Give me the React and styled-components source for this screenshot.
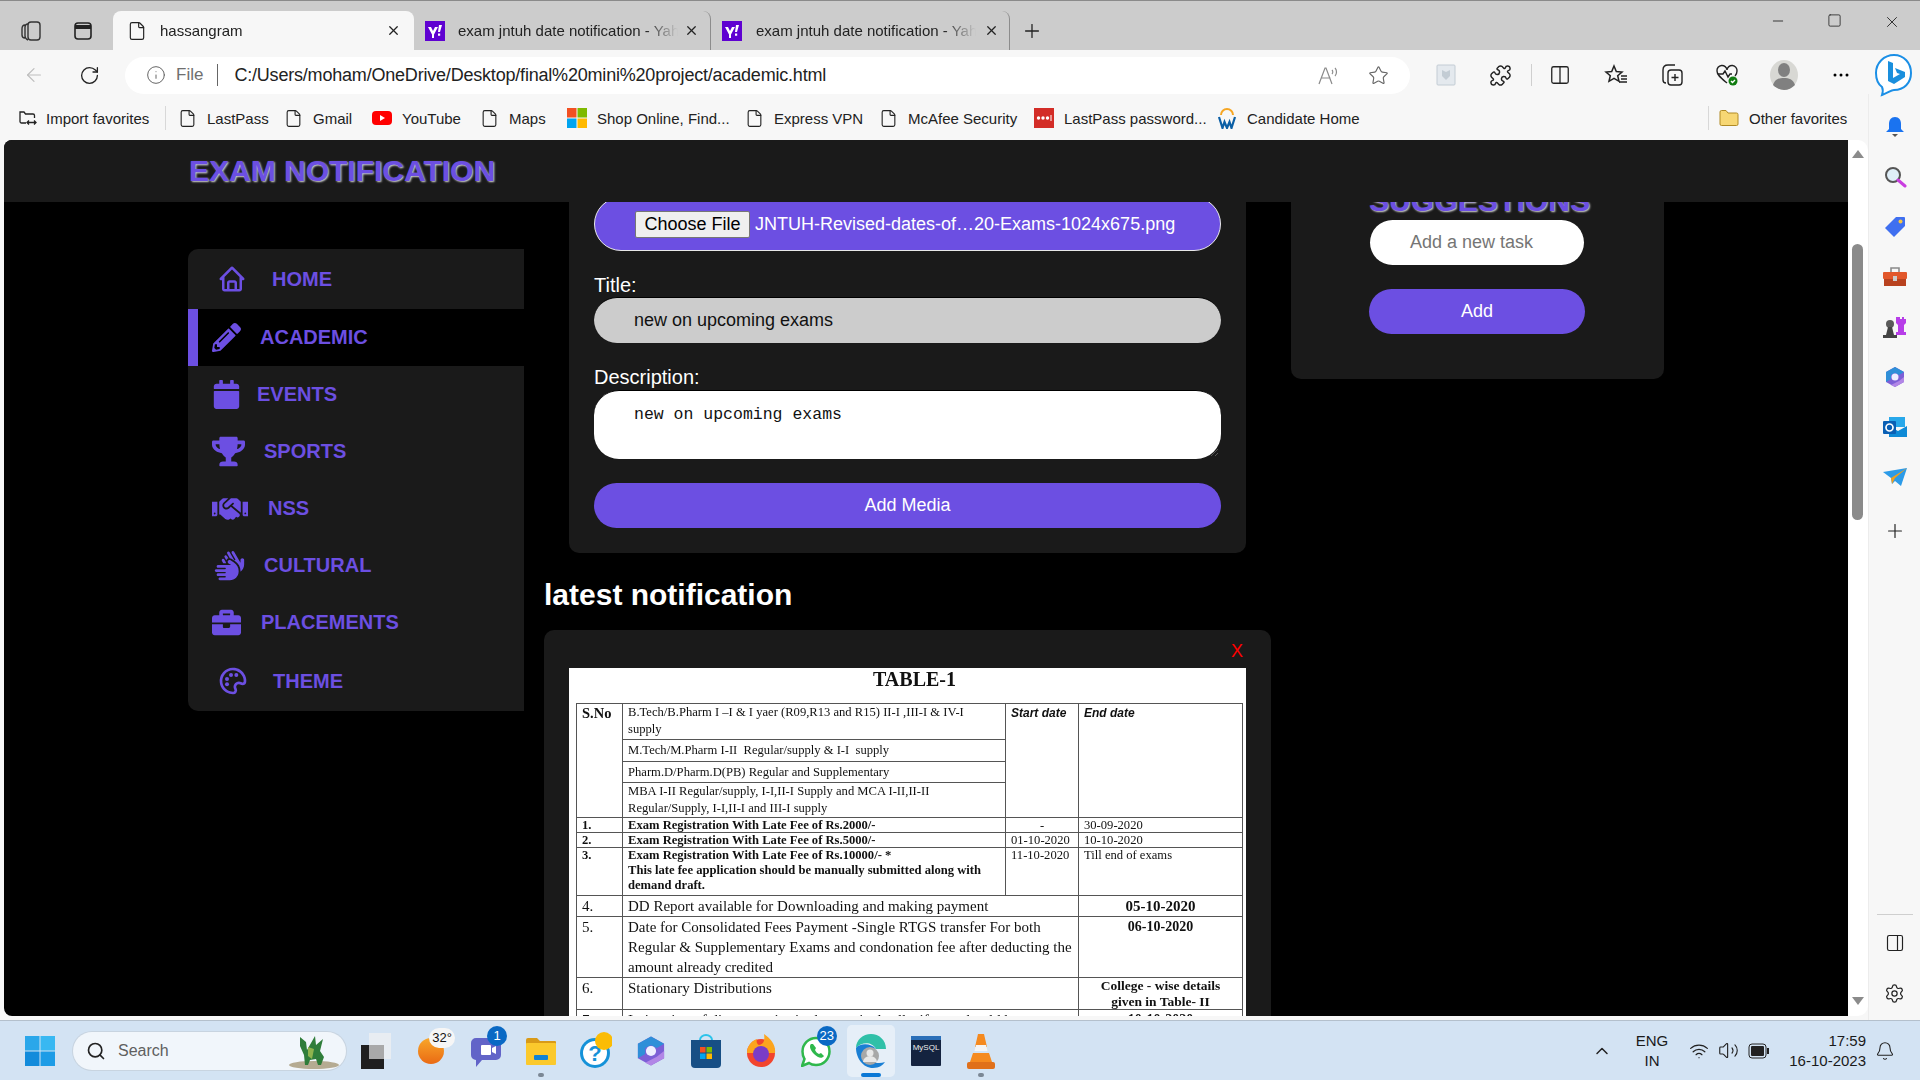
import React from 'react'
import styled, { createGlobalStyle } from 'styled-components'
import { FaPencilAlt, FaCalendar, FaTrophy, FaHandshake, FaBriefcase } from 'react-icons/fa'
import { FaHands } from 'react-icons/fa6'
import { BiHome, BiPalette } from 'react-icons/bi'
import {
  ArrowLeft, RotateCw, Info, Star, Puzzle, Columns2, X, Plus, Minus, Square, File, ChevronUp, Bell,
  Wifi, Volume2, Settings, PanelRight, Search,
} from 'lucide-react'

const violet = '#6c4fe2'
const sans = '"Liberation Sans", Arial, sans-serif'

const Global = createGlobalStyle`
  html, body { margin: 0; padding: 0; width: 1920px; height: 1080px; overflow: hidden; }
  body { font-family: ${sans}; background: #f7f7f7; }
  * { box-sizing: border-box; }
`

const Screen = styled.div`
  width: 1920px;
  height: 1080px;
  display: flex;
  flex-direction: column;
  overflow: hidden;
`

/* ---- browser chrome ---- */
const TitleBar = styled.div`
  height: 50px;
  background: #cccccc;
  border-top: 1px solid #8a8a8a;
  display: flex;
  align-items: flex-end;
  position: relative;
  flex: none;
`
const TabTools = styled.div`
  width: 113px;
  height: 39px;
  display: flex;
  align-items: center;
  gap: 31px;
  padding-left: 20px;
`
const Tab = styled.div`
  width: ${({ $w }) => $w}px;
  height: 39px;
  display: flex;
  align-items: center;
  padding-left: ${({ $active }) => ($active ? 14 : 11)}px;
  background: ${({ $active }) => ($active ? '#f7f7f7' : 'transparent')};
  border-radius: 8px 8px 0 0;
  border-right: ${({ $sep }) => ($sep ? '1px solid #8c8c8c' : 'none')};
  background-clip: padding-box;
  font-size: 15px;
  color: #222;
  position: relative;
`
const TabText = styled.span`
  width: ${({ $w }) => $w}px;
  margin-left: ${({ $ml }) => $ml}px;
  white-space: nowrap;
  overflow: hidden;
  -webkit-mask-image: linear-gradient(90deg, #000 85%, transparent);
  mask-image: linear-gradient(90deg, #000 85%, transparent);
`
const TabClose = styled.span`
  position: absolute;
  right: ${({ $r }) => $r}px;
  top: 12px;
  display: flex;
`
const NewTab = styled.div`
  width: 44px;
  height: 39px;
  display: flex;
  align-items: center;
  justify-content: center;
`
const WindowButtons = styled.div`
  margin-left: auto;
  height: 49px;
  display: flex;
  align-items: flex-start;
  padding-top: 12px;
  padding-right: 19px;
  gap: 41px;
`
const Toolbar = styled.div`
  height: 44px;
  flex: none;
  background: #f7f7f7;
  display: flex;
  align-items: center;
  padding-top: 6px;
  position: relative;
`
const NavBtn = styled.div`
  width: ${({ $w }) => $w}px;
  display: flex;
  justify-content: center;
  margin-left: ${({ $ml }) => $ml || 0}px;
`
const Address = styled.div`
  width: 1285px;
  height: 37px;
  margin-left: 24px;
  background: #fff;
  border-radius: 19px;
  display: flex;
  align-items: center;
  padding-left: 21px;
  font-size: 18px;
  color: #222;
  position: relative;
`
const FileWord = styled.span`
  color: #6f6f6f;
  margin-left: 10px;
  padding-right: 14px;
  border-right: 1px solid #666;
  line-height: 22px;
  font-size: 17px;
`
const Url = styled.span`
  margin-left: 16px;
  letter-spacing: -0.2px;
`
const AddressEnd = styled.div`
  position: absolute;
  right: 21px;
  top: 8px;
  display: flex;
  gap: 28px;
  align-items: center;
`
const ToolIcons = styled.div`
  display: flex;
  align-items: center;
  margin-left: 8px;
`
const ToolSlot = styled.div`
  width: ${({ $w }) => $w || 55}px;
  display: flex;
  justify-content: center;
  align-items: center;
`
const ToolSep = styled.div`
  width: 1px;
  height: 22px;
  margin-left: 4px;
  background: #cfcfcf;
`
const Body = styled.div`
  flex: 1;
  min-height: 0;
  display: flex;
`
const LeftCol = styled.div`
  width: 1868px;
  display: flex;
  flex-direction: column;
`
const FavBar = styled.div`
  height: 46px;
  flex: none;
  display: flex;
  align-items: center;
  padding-left: 18px;
  padding-top: 2px;
  font-size: 15px;
  color: #222;
`
const FavItem = styled.div`
  width: ${({ $w }) => $w}px;
  margin-left: ${({ $ml }) => $ml || 0}px;
  display: flex;
  align-items: center;
  gap: ${({ $gap }) => $gap || 10}px;
  white-space: nowrap;
  flex: none;
`
const FavIcon = styled.span`
  width: 20px;
  height: 20px;
  display: flex;
  align-items: center;
  justify-content: center;
  flex: none;
`
const FavSep = styled.div`
  width: 1px;
  height: 24px;
  background: #d8d8d8;
  flex: none;
`
const Viewport = styled.div`
  height: 876px;
  display: flex;
  padding-left: 4px;
`
const Rail = styled.div`
  width: 52px;
  display: flex;
  flex-direction: column;
  align-items: center;
  padding-top: 8px;
  height: 926px;
  border-left: 1px solid #ececec;
`
const RailSlot = styled.div`
  height: 50px;
  margin-top: ${({ $mt }) => $mt || 0}px;
  display: flex;
  align-items: center;
  justify-content: center;
  flex: none;
`
const RailBottom = styled.div`
  margin-top: auto;
  display: flex;
  flex-direction: column;
  align-items: center;
  margin-bottom: 2px;
`
const RailRule = styled.div`
  width: 36px;
  height: 1px;
  background: #cfcfcf;
  margin-bottom: 3px;
`

/* ---- scrollbar ---- */
const ScrollTrack = styled.div`
  width: 20px;
  background: #fff;
  border-radius: 0 10px 10px 0;
  position: relative;
  flex: none;
`
const ScrollThumb = styled.div`
  position: absolute;
  left: 4px;
  top: 104px;
  width: 11px;
  height: 276px;
  border-radius: 6px;
  background: #8b8b8b;
`
const ScrollArrow = styled.div`
  position: absolute;
  left: 4px;
  ${({ $down }) => ($down ? 'bottom: 11px;' : 'top: 10px;')}
  border-left: 6px solid transparent;
  border-right: 6px solid transparent;
  ${({ $down }) => ($down ? 'border-top: 8px solid #8b8b8b;' : 'border-bottom: 8px solid #8b8b8b;')}
`

/* ---- the page ---- */
const Page = styled.div`
  width: 1844px;
  background: #000;
  border-radius: 8px 0 0 8px;
  overflow: hidden;
  display: flex;
  flex-direction: column;
`
const PageHeader = styled.header`
  height: 62px;
  flex: none;
  background: #1a1a1a;
  display: flex;
  align-items: center;
  padding-left: 185px;
`
const Logo = styled.h1`
  margin: 0;
  font-size: 30px;
  font-weight: 700;
  color: ${violet};
  text-shadow: 1px 1px 2px #d8d8d8;
`
const Content = styled.main`
  flex: 1;
  min-height: 0;
  overflow: hidden;
  display: flex;
  align-items: flex-start;
  padding-left: 184px;
  gap: 20px;
`
const SideNav = styled.nav`
  width: 336px;
  flex: none;
  margin-top: 47px;
  background: #1a1a1a;
  border-radius: 10px 0 0 10px;
  overflow: hidden;
`
const NavItem = styled.a`
  height: ${({ $h }) => $h || 57}px;
  display: flex;
  align-items: center;
  padding-left: ${({ $indent }) => $indent}px;
  gap: ${({ $gap }) => $gap}px;
  color: ${violet};
  font-size: 20px;
  font-weight: 700;
  background: ${({ $active }) => ($active ? '#000' : 'transparent')};
  border-left: ${({ $active }) => ($active ? `10px solid ${violet}` : 'none')};
  svg { flex: none; }
`
const Middle = styled.section`
  width: 727px;
  flex: none;
`
const FormCard = styled.form`
  width: 677px;
  margin-left: 25px;
  margin-top: -5px;
  background: #1a1a1a;
  border-radius: 0 0 10px 10px;
  padding: 0 25px 25px 25px;
  display: flex;
  flex-direction: column;
  color: #fff;
`
const FilePill = styled.div`
  height: 54px;
  background: ${violet};
  border: 1px solid #e8e8e8;
  border-radius: 27px;
  display: flex;
  align-items: center;
  padding-left: 40px;
  font-size: 18px;
  gap: 5px;
  white-space: nowrap;
`
const ChooseFile = styled.button`
  width: 115px;
  height: 27px;
  padding: 0;
  font: 18px ${sans};
  color: #000;
  background: #efefef;
  border: 1px solid #767676;
  border-radius: 2px;
`
const FieldLabel = styled.label`
  font-size: 20px;
  line-height: 23px;
  margin-top: ${({ $mt }) => $mt}px;
  margin-bottom: ${({ $mb }) => $mb ?? 1}px;
`
const TextField = styled.div`
  height: 46px;
  border-radius: 25px;
  background: #cccccc;
  color: #111;
  font-size: 18px;
  padding-left: 40px;
  display: flex;
  align-items: center;
  border-top: 1px solid #000;
`
const TextArea = styled.div`
  height: 69px;
  border-radius: 25px;
  background: #fff;
  color: #111;
  font: 16.5px "Liberation Mono", monospace;
  padding: 14px 0 0 40px;
  position: relative;
  border-top: 1px solid #000;
`
const ResizeGrip = styled.svg`
  position: absolute;
  right: 2px;
  bottom: 2px;
`
const PrimaryButton = styled.button`
  height: 45px;
  margin-top: ${({ $mt }) => $mt}px;
  margin-left: ${({ $ml }) => $ml || 0}px;
  width: ${({ $w }) => ($w ? `${$w}px` : 'auto')};
  border: none;
  border-radius: 25px;
  background: ${violet};
  color: #fff;
  font: 18px ${sans};
`
const SectionTitle = styled.h2`
  margin: 25px 0 18px;
  color: #fff;
  font-size: 30px;
  line-height: 34px;
  font-weight: 700;
`
const PostCard = styled.article`
  background: #1a1a1a;
  border-radius: 10px;
  padding: 38px 25px 0;
  position: relative;
`
const RemoveX = styled.span`
  position: absolute;
  top: 11px;
  right: 28px;
  color: #ff0000;
  font-size: 18px;
`

/* the notice photo in the post */
const Notice = styled.div`
  width: 677px;
  height: 420px;
  background: #fff;
  color: #111;
  font-family: "Liberation Serif", "Times New Roman", serif;
  padding: 0 3px 0 7px;
  filter: blur(0.35px);
`
const NoticeTitle = styled.div`
  height: 35px;
  padding-left: 10px;
  text-align: center;
  font-size: 20px;
  line-height: 23px;
  font-weight: 700;
`
const Sheet = styled.table`
  width: 666px;
  table-layout: fixed;
  border-collapse: collapse;
  font-size: 12.6px;
  line-height: 14px;
  td {
    border: 1px solid #555;
    padding: 0 5px;
    vertical-align: top;
    overflow: hidden;
  }
`
const SheetRow = styled.tr`
  height: ${({ $h }) => $h}px;
`
const Big = styled.td`
  font-size: ${({ $size }) => $size || 15}px;
  line-height: 20px;
  font-weight: ${({ $bold }) => ($bold ? 700 : 400)};
  text-align: ${({ $center }) => ($center ? 'center' : 'left')};
`
const SubCell = styled.td`
  font-weight: ${({ $bold }) => ($bold ? 700 : 400)};
  font-style: ${({ $italic }) => ($italic ? 'italic' : 'normal')};
  font-family: ${({ $italic }) => ($italic ? sans : 'inherit')};
  font-size: ${({ $size }) => $size || 12.6}px;
  line-height: ${({ $lh }) => $lh || 14}px;
  text-align: ${({ $center }) => ($center ? 'center' : 'left')};
`

const SidePanel = styled.aside`
  width: 373px;
  height: 195px;
  flex: none;
  margin-top: -18px;
  background: #1a1a1a;
  border-radius: 0 0 10px 10px;
  padding-left: 79px;
`
const PanelTitle = styled.h2`
  margin: 0 0 2px -1px;
  width: 218px;
  text-align: center;
  font-size: 30px;
  line-height: 34px;
  font-weight: 700;
  letter-spacing: 0.1px;
  color: ${violet};
  text-shadow: 1px 1px 2px #d8d8d8;
`
const TaskInput = styled.div`
  width: 214px;
  height: 45px;
  background: #fff;
  border-radius: 23px;
  color: #757575;
  font-size: 18px;
  display: flex;
  align-items: center;
  padding-left: 40px;
`

/* ---- taskbar ---- */
const TaskBar = styled.footer`
  height: 60px;
  flex: none;
  background: #d3e3f3;
  border-top: 1px solid #b4c0cc;
  display: flex;
  align-items: center;
  position: relative;
`
const StartBtn = styled.div`
  width: 73px;
  display: flex;
  justify-content: center;
  padding-left: 6px;
`
const SearchBox = styled.div`
  width: 273px;
  height: 38px;
  background: #f1f6fb;
  border-radius: 19px;
  box-shadow: 0 0 0 1px #c8d4e0;
  display: flex;
  align-items: center;
  padding-left: 13px;
  gap: 12px;
  font-size: 16px;
  color: #5f5f5f;
  position: relative;
`
const Dragon = styled.svg`
  position: absolute;
  right: 6px;
  top: 1px;
`
const Apps = styled.div`
  display: flex;
  align-items: center;
  margin-left: 2px;
`
const AppSlot = styled.div`
  width: ${({ $w }) => $w || 55}px;
  margin: 0 ${({ $w }) => ($w ? (55 - $w) / 2 : 0)}px;
  height: 52px;
  display: flex;
  align-items: center;
  justify-content: center;
  position: relative;
  border-radius: 5px;
  background: ${({ $active }) => ($active ? '#e6eff8' : 'transparent')};
`
const Badge = styled.span`
  position: absolute;
  top: ${({ $top }) => $top ?? 1}px;
  right: ${({ $right }) => $right ?? 6}px;
  min-width: 20px;
  height: 20px;
  padding: 0 3px;
  border-radius: 10px;
  background: ${({ $light }) => ($light ? '#f6f6f6' : '#0a69c4')};
  color: ${({ $light }) => ($light ? '#111' : '#fff')};
  font-size: 13px;
  line-height: 20px;
  text-align: center;
`
const RunDot = styled.span`
  position: absolute;
  bottom: 0;
  left: 50%;
  margin-left: ${({ $wide }) => ($wide ? -10 : -3)}px;
  width: ${({ $wide }) => ($wide ? 20 : 6)}px;
  height: 4px;
  border-radius: 2px;
  background: ${({ $wide }) => ($wide ? '#0a78d6' : '#7b8794')};
`
const Tray = styled.div`
  margin-left: auto;
  display: flex;
  align-items: center;
  font-size: 15px;
  color: #1a1a1a;
  padding-right: 25px;
`
const TrayLang = styled.div`
  width: 40px;
  margin-left: 20px;
  text-align: center;
  line-height: 20px;
`
const TrayIcons = styled.div`
  display: flex;
  align-items: center;
  gap: 9px;
  margin-left: 17px;
`
const Clock = styled.div`
  text-align: right;
  line-height: 20px;
  margin-left: 8px;
  width: 88px;
`
const TrayBell = styled.div`
  margin-left: 9px;
  display: flex;
`

/* ---- drawn logos ---- */
const YahooIcon = () => (
  <svg width="20" height="20" viewBox="0 0 20 20">
    <rect width="20" height="20" fill="#5f01d1" />
    <path d="M3 6h3l2 4 2-4h3l-4 7.5V17H7v-3.500zM14 4h3l-2 7h-2zM13 12.500h2.200v2.300H13z" fill="#fff" />
  </svg>
)
const MsIcon = ({ size = 20 }) => (
  <svg width={size} height={size} viewBox="0 0 20 20">
    <rect width="9.500" height="9.500" fill="#f25022" />
    <rect x="10.500" width="9.500" height="9.500" fill="#7fba00" />
    <rect y="10.500" width="9.500" height="9.500" fill="#00a4ef" />
    <rect x="10.500" y="10.500" width="9.500" height="9.500" fill="#ffb900" />
  </svg>
)
const YouTubeIcon = () => (
  <svg width="20" height="20" viewBox="0 0 20 20">
    <rect y="3" width="20" height="14" rx="4" fill="#f00" />
    <path d="M8 7l5 3-5 3z" fill="#fff" />
  </svg>
)
const LastPassIcon = () => (
  <svg width="20" height="20" viewBox="0 0 20 20">
    <rect width="20" height="20" fill="#d32d27" />
    <circle cx="4.500" cy="10" r="1.700" fill="#fff" />
    <circle cx="9" cy="10" r="1.700" fill="#fff" />
    <circle cx="13.500" cy="10" r="1.700" fill="#fff" />
    <rect x="16.500" y="7" width="1" height="6" fill="#fff" />
  </svg>
)
const WorkdayIcon = () => (
  <svg width="20" height="22" viewBox="0 0 20 22">
    <path d="M4 8a6 6 0 0 1 12 0" fill="none" stroke="#f6a623" strokeWidth="2" />
    <path d="M2 10l3.500 11 2-6 2.500 6 2.500-6 2 6L18 10" fill="none" stroke="#0b5fa5" strokeWidth="2.200" />
  </svg>
)
const FolderIcon = ({ w = 20, h = 20 }) => (
  <svg width={w} height={h} viewBox="0 0 20 20">
    <path d="M1 4a1.500 1.500 0 0 1 1.500-1.500H7L9 5h8.500A1.500 1.500 0 0 1 19 6.500V16a1.500 1.500 0 0 1-1.500 1.500h-15A1.500 1.500 0 0 1 1 16z" fill="#f7d774" stroke="#b08a24" />
  </svg>
)
const ImportIcon = () => (
  <svg width="20" height="20" viewBox="0 0 20 20" fill="none" stroke="#222" strokeWidth="1.300">
    <path d="M8 15H3.500A1.500 1.500 0 0 1 2 13.500V4h4l1.500 2H15a1.500 1.500 0 0 1 1.500 1.500V10" />
    <path d="M9 14.500h9M11 12.500l-2 2 2 2M16 12.500l2 2-2 2" />
  </svg>
)
const BingIcon = () => (
  <svg width="40" height="44" viewBox="0 0 40 44">
    <path d="M20 2c10 0 17 8 17 18s-7 17-17 17c-3 0-6 3-12 5 1-3 1-6 0-8C4 31 2 26 2 20 2 10 10 2 20 2z" fill="#fff" stroke="#1b8fe6" strokeWidth="2" />
    <path d="M14 8l5 2v15l7-4-3-1-2-5 10 4v5l-11 7-6-3z" fill="#1a8fdd" />
  </svg>
)
const SearchRail = () => (
  <svg width="24" height="24" viewBox="0 0 24 24" fill="none">
    <circle cx="10" cy="10" r="7" fill="#dfeef8" stroke="#555" strokeWidth="2" />
    <path d="M15 15l7 6" stroke="#c93ee0" strokeWidth="3" strokeLinecap="round" />
  </svg>
)
const BellRail = () => (
  <svg width="20" height="22" viewBox="0 0 20 22">
    <path d="M10 1c4 0 6 3 6 7v5l3 3H1l3-3V8c0-4 2-7 6-7z" fill="#1a73f0" />
    <path d="M7 18h6l-3 3z" fill="#555" />
  </svg>
)
const TagRail = () => (
  <svg width="22" height="22" viewBox="0 0 22 22">
    <path d="M12 1h8a1 1 0 0 1 1 1v8L10 21 1 12z" fill="#3f6ff0" />
    <circle cx="16.500" cy="5.500" r="2" fill="#f5c542" />
  </svg>
)
const ToolboxRail = () => (
  <svg width="24" height="22" viewBox="0 0 24 22">
    <path d="M8 6V2h8v4" fill="none" stroke="#8a8a8a" strokeWidth="1.600" />
    <rect y="6" width="24" height="7" rx="1" fill="#e2572b" />
    <rect x="1" y="13" width="22" height="7" fill="#b8421f" />
    <rect x="10" y="10" width="4" height="5" fill="#ccc" />
  </svg>
)
const ChessRail = () => (
  <svg width="24" height="24" viewBox="0 0 24 24">
    <path d="M15 2h2v2h2V2h2v2h2v4l-2 2v7h2v3H13v-3h2v-7l-2-2V2h2z" fill="#b73ee8" />
    <circle cx="7" cy="9" r="4" fill="#5a5a5a" />
    <path d="M5 12h4l2 8H3zM0 20h14v3H0z" fill="#444" />
  </svg>
)
const CopilotIcon = ({ size = 22 }) => (
  <svg width={size} height={size} viewBox="0 0 22 22">
    <path d="M11 1l9 5v10l-9 5-9-5V6z" fill="#7d5fd6" />
    <path d="M11 1l9 5-5 3-4-2-4 2v4L2 16V6z" fill="#2f8fd8" />
    <path d="M20 11v5l-9 5-4-2 8-4z" fill="#b286e6" />
    <circle cx="11" cy="11" r="3.500" fill="#eef" />
  </svg>
)
const OutlookRail = () => (
  <svg width="24" height="22" viewBox="0 0 24 22">
    <rect x="6" y="1" width="16" height="10" fill="#28a8ea" />
    <path d="M6 10l9 5 9-5v11H6z" fill="#0f8ad6" />
    <rect y="5" width="13" height="13" rx="1" fill="#0a5fb4" />
    <circle cx="6.500" cy="11.500" r="3.500" fill="none" stroke="#fff" strokeWidth="1.700" />
  </svg>
)
const SendRail = () => (
  <svg width="24" height="18" viewBox="0 0 24 18">
    <path d="M0 4l24-4-6 18-6-5-3 3-1-6z" fill="#2c9be8" />
    <path d="M24 0L8 10l1 6 3-6z" fill="#f0a020" />
  </svg>
)
const WinLogo = () => (
  <svg width="30" height="30" viewBox="0 0 30 30">
    <rect width="14.500" height="14.500" fill="#2aa7ea" />
    <rect x="15.500" width="14.500" height="14.500" fill="#38b8f2" />
    <rect y="15.500" width="14.500" height="14.500" fill="#128bdb" />
    <rect x="15.500" y="15.500" width="14.500" height="14.500" fill="#1d9ce6" />
  </svg>
)
const DragonArt = () => (
  <Dragon width="52" height="36" viewBox="0 0 52 36">
    <ellipse cx="26" cy="32" rx="25" ry="4" fill="#b5ab92" />
    <path d="M12 4l6 5 1 8 8-14 1 9 7-6-3 12 4 6-3 8h-3l-2-6-6 1-2 5h-3l-1-10-4-9z" fill="#2f7d3a" />
    <path d="M20 14l6 2-2 10-4-3z" fill="#8fb34e" />
  </Dragon>
)
const TaskViewIcon = () => (
  <svg width="30" height="36" viewBox="0 0 30 36">
    <rect x="8" y="0" width="22" height="26" fill="#e8edf2" />
    <rect x="0" y="12" width="23" height="24" fill="#1f1f1f" />
    <rect x="8" y="12" width="15" height="14" fill="#a9a9a9" />
  </svg>
)
const WeatherIcon = () => (
  <svg width="26" height="30" viewBox="0 0 26 30">
    <defs>
      <linearGradient id="sun" x1="0" y1="0" x2="0" y2="1">
        <stop offset="0" stopColor="#f8a72a" />
        <stop offset="1" stopColor="#ea6a14" />
      </linearGradient>
    </defs>
    <circle cx="13" cy="15" r="13" fill="url(#sun)" />
  </svg>
)
const TeamsIcon = () => (
  <svg width="32" height="34" viewBox="0 0 32 34">
    <path d="M6 4h20a5 5 0 0 1 5 5v12a5 5 0 0 1-5 5H12l-6 7v-7a5 5 0 0 1-5-5V9a5 5 0 0 1 5-5z" fill="#6264c8" />
    <rect x="11" y="11" width="10" height="10" rx="1" fill="#fff" />
    <path d="M22 14l4-2v8l-4-2z" fill="#fff" />
  </svg>
)
const ExplorerIcon = () => (
  <svg width="32" height="28" viewBox="0 0 32 28">
    <path d="M1 3a2 2 0 0 1 2-2h9l3 3h15a1 1 0 0 1 1 1v4H1z" fill="#d99a17" />
    <rect x="1" y="6" width="30" height="22" rx="1" fill="#fbc92c" />
    <rect x="9" y="18" width="14" height="5" rx="1" fill="#0f82d4" />
  </svg>
)
const HelpIcon = () => (
  <svg width="32" height="38" viewBox="0 0 32 38">
    <circle cx="15" cy="21" r="15" fill="#1592d8" />
    <circle cx="15" cy="21" r="12" fill="#fff" />
    <text x="15" y="29" textAnchor="middle" fontSize="22" fontWeight="700" fill="#1592d8" fontFamily="Liberation Sans">?</text>
    <circle cx="24" cy="9" r="9" fill="#fbbc05" />
  </svg>
)
const StoreIcon = () => (
  <svg width="30" height="34" viewBox="0 0 30 34">
    <path d="M9 6a6 5 0 0 1 12 0" fill="none" stroke="#2cc3ea" strokeWidth="2" />
    <path d="M0 6h30v24a4 4 0 0 1-4 4H4a4 4 0 0 1-4-4z" fill="#174f85" />
    <rect x="9" y="13" width="5.500" height="5.500" fill="#f25022" />
    <rect x="15.500" y="13" width="5.500" height="5.500" fill="#7fba00" />
    <rect x="9" y="19.500" width="5.500" height="5.500" fill="#00a4ef" />
    <rect x="15.500" y="19.500" width="5.500" height="5.500" fill="#ffb900" />
  </svg>
)
const FirefoxIcon = () => (
  <svg width="30" height="34" viewBox="0 0 30 34">
    <circle cx="15" cy="19" r="14" fill="#f2452d" />
    <path d="M1 19C1 10 8 6 11 5c-1 3 0 5 2 6 5-1 6-5 5-11 7 5 12 11 11 19z" fill="#fca51e" />
    <circle cx="15" cy="20" r="8" fill="#7a3cc7" />
  </svg>
)
const WhatsAppIcon = () => (
  <svg width="30" height="32" viewBox="0 0 30 32">
    <path d="M15 3a13.500 13.500 0 0 1 0 27c-3 0-5-.5-7-2l-7 3 2.500-7C2 22 1.500 19 1.500 16.500A13.500 13.500 0 0 1 15 3z" fill="#fff" stroke="#2fb84c" strokeWidth="2.500" />
    <path d="M10 9c-2 2-1 6 3 10s8 5 10 2l-3-3-2 1c-2-1-3-2-4-4l1-2-3-4z" fill="#2fb84c" />
  </svg>
)
const EdgeIcon = () => (
  <svg width="32" height="36" viewBox="0 0 32 36">
    <path d="M16 1C8 1 1 7 1 15c5-6 16-7 20 1h10C31 7 24 1 16 1z" fill="#2fc0a8" />
    <path d="M1 15c0 10 7 20 17 20 6 0 10-3 12-6-8 3-17 0-17-10 0-3 2-5 8-3-5-6-16-6-20-1z" fill="#1a7fd4" />
    <circle cx="15" cy="23" r="9" fill="#a8a8a8" />
    <circle cx="15" cy="20" r="3.500" fill="#e8e8e8" />
    <path d="M8 29a7 6 0 0 1 14 0z" fill="#e8e8e8" />
  </svg>
)
const MySqlIcon = () => (
  <svg width="30" height="30" viewBox="0 0 30 30">
    <rect width="30" height="30" rx="1" fill="#14233f" />
    <rect width="30" height="4" fill="#2a6fb8" />
    <text x="15" y="14" textAnchor="middle" fontSize="8" fill="#eee" fontFamily="Liberation Sans">MySQL</text>
  </svg>
)
const VlcIcon = () => (
  <svg width="28" height="36" viewBox="0 0 28 36">
    <path d="M11 1h6l3 13H8z" fill="#f58a1f" />
    <path d="M9 12h10l1.500 6h-13z" fill="#f4f4f4" />
    <path d="M6 20h16l3 9H3z" fill="#f58a1f" />
    <rect y="29" width="28" height="7" rx="2" fill="#e0701a" />
  </svg>
)
const Battery = () => (
  <svg width="22" height="16" viewBox="0 0 22 16" fill="none">
    <rect x="1" y="1" width="17" height="14" rx="3" stroke="#222" />
    <rect x="3" y="3" width="13" height="10" rx="1" fill="#222" />
    <rect x="19" y="5" width="2" height="6" fill="#222" />
  </svg>
)
const HeartCheck = () => (
  <svg width="24" height="24" viewBox="0 0 24 24" fill="none" stroke="#222" strokeWidth="1.400">
    <path d="M12 20C6 15 2 12 2 8a5 5 0 0 1 10-1 5 5 0 0 1 10 1c0 2-1 4-2 5" />
    <path d="M3 11h5l2-3 3 6 2-3h2" />
    <circle cx="18" cy="18" r="4.500" fill="#107c10" stroke="none" />
    <path d="M16 18l1.500 1.500L20 17" stroke="#fff" />
  </svg>
)
const FavoritesIcon = () => (
  <svg width="24" height="24" viewBox="0 0 24 24" fill="none" stroke="#222" strokeWidth="1.500">
    <path d="M10 3l2.300 5.500 5.700.5-4.300 3.700 1.300 5.600-5-3-5 3 1.300-5.600L2 9l5.700-.5z" />
    <path d="M17 13h6M17 16h6M15 19h8" />
  </svg>
)
const CollectionsIcon = () => (
  <svg width="24" height="24" viewBox="0 0 24 24" fill="none" stroke="#222" strokeWidth="1.400">
    <path d="M6 20c-2 0-3-1-3-3V7c0-3 2-5 5-5h7" />
    <rect x="8" y="7" width="14" height="15" rx="3" />
    <path d="M15 11v7M11.500 14.500h7" />
  </svg>
)
const WalletIcon = () => (
  <svg width="20" height="22" viewBox="0 0 20 22" fill="none">
    <rect x="1" y="1" width="18" height="20" rx="1" fill="#e4e9ee" stroke="#c3ccd4" />
    <path d="M6 6l4 2 4-2v6l-4 4-4-4z" fill="#c3ccd4" />
  </svg>
)
const Profile = () => (
  <svg width="28" height="30" viewBox="0 0 28 30">
    <ellipse cx="14" cy="15" rx="14" ry="15" fill="#d8d8d4" />
    <ellipse cx="14" cy="10" rx="6" ry="7" fill="#808080" />
    <path d="M3 25c2-6 6-7 11-7s9 1 11 7c-3 3-7 5-11 5s-8-2-11-5z" fill="#808080" />
  </svg>
)
const TabsIcon = () => (
  <svg width="22" height="24" viewBox="0 0 22 24" fill="none" stroke="#333" strokeWidth="1.400">
    <rect x="8" y="3" width="12" height="18" rx="3" />
    <path d="M8 5c-2 0-3 1-3 3v9c0 2 1 3 3 4M5 6C3 6 2 8 2 10v6c0 2 1 3 3 3" />
  </svg>
)
const SideTabIcon = () => (
  <svg width="20" height="20" viewBox="0 0 20 20" fill="none" stroke="#222" strokeWidth="1.600">
    <rect x="2" y="2" width="16" height="16" rx="3" />
    <path d="M2 6h16" strokeWidth="4" />
  </svg>
)

const navItems = [
  { label: 'HOME', icon: <BiHome size={30} />, indent: 29, gap: 25, h: 60 },
  { label: 'ACADEMIC', icon: <FaPencilAlt size={29} />, indent: 14, gap: 19, active: true },
  { label: 'EVENTS', icon: <FaCalendar size={29} />, indent: 24, gap: 16 },
  { label: 'SPORTS', icon: <FaTrophy size={33} />, indent: 24, gap: 19 },
  { label: 'NSS', icon: <FaHandshake size={36} />, indent: 24, gap: 20 },
  { label: 'CULTURAL', icon: <FaHands size={33} />, indent: 25, gap: 18 },
  { label: 'PLACEMENTS', icon: <FaBriefcase size={29} />, indent: 24, gap: 20 },
  { label: 'THEME', icon: <BiPalette size={32} />, indent: 29, gap: 24, h: 60 },
]

const favs = [
  { w: 147, gap: 8, icon: <ImportIcon />, label: 'Import favorites' },
  { w: 106, icon: <File size={19} strokeWidth={1.4} />, label: 'LastPass', ml: 11 },
  { w: 89, icon: <File size={19} strokeWidth={1.4} />, label: 'Gmail' },
  { w: 107, icon: <YouTubeIcon />, label: 'YouTube' },
  { w: 88, icon: <File size={19} strokeWidth={1.4} />, label: 'Maps' },
  { w: 177, icon: <MsIcon />, label: 'Shop Online, Find...' },
  { w: 134, icon: <File size={19} strokeWidth={1.4} />, label: 'Express VPN' },
  { w: 156, icon: <File size={19} strokeWidth={1.4} />, label: 'McAfee Security' },
  { w: 183, icon: <LastPassIcon />, label: 'LastPass password...' },
  { w: 491, icon: <WorkdayIcon />, label: 'Candidate Home' },
]

const railIcons = [<BellRail />, <SearchRail />, <TagRail />, <ToolboxRail />, <ChessRail />, <CopilotIcon />, <OutlookRail />, <SendRail />]

function NoticeSheet() {
  return (
    <Notice>
      <NoticeTitle>TABLE-1</NoticeTitle>
      <Sheet>
        <colgroup>
          <col width="46" />
          <col width="383" />
          <col width="73" />
          <col width="164" />
        </colgroup>
        <tbody>
          <SheetRow $h={36}>
            <SubCell rowSpan={4} $bold $size={14.5} $lh={18}>S.No</SubCell>
            <SubCell $lh={17}>B.Tech/B.Pharm I –I &amp; I yaer (R09,R13 and R15) II-I ,III-I &amp; IV-I<br />supply</SubCell>
            <SubCell rowSpan={4} $bold $italic $size={12} $lh={18}>Start date</SubCell>
            <SubCell rowSpan={4} $bold $italic $size={12} $lh={18}>End date</SubCell>
          </SheetRow>
          <SheetRow $h={22}><SubCell $lh={21}>M.Tech/M.Pharm I-II&nbsp; Regular/supply &amp; I-I&nbsp; supply</SubCell></SheetRow>
          <SheetRow $h={21}><SubCell $lh={20}>Pharm.D/Pharm.D(PB) Regular and Supplementary</SubCell></SheetRow>
          <SheetRow $h={35}><SubCell $lh={17}>MBA I-II Regular/supply, I-I,II-I Supply and MCA I-II,II-II<br />Regular/Supply, I-I,II-I and III-I supply</SubCell></SheetRow>
          <SheetRow $h={15}><SubCell $bold>1.</SubCell><SubCell $bold>Exam Registration With Late Fee of Rs.2000/-</SubCell><SubCell $center>-</SubCell><SubCell>30-09-2020</SubCell></SheetRow>
          <SheetRow $h={15}><SubCell $bold>2.</SubCell><SubCell $bold>Exam Registration With Late Fee of Rs.5000/-</SubCell><SubCell>01-10-2020</SubCell><SubCell>10-10-2020</SubCell></SheetRow>
          <SheetRow $h={48}>
            <SubCell $bold $lh={15}>3.</SubCell>
            <SubCell $bold $lh={15}>Exam Registration With Late Fee of Rs.10000/- *<br />This late fee application should be manually submitted along with<br />demand draft.</SubCell>
            <SubCell $lh={15}>11-10-2020</SubCell>
            <SubCell $lh={15}>Till end of exams</SubCell>
          </SheetRow>
          <SheetRow $h={21}><Big>4.</Big><Big colSpan={2}>DD Report available for Downloading and making payment</Big><Big $bold $center>05-10-2020</Big></SheetRow>
          <SheetRow $h={61}>
            <Big>5.</Big>
            <Big colSpan={2}>Date for Consolidated Fees Payment -Single RTGS transfer For both Regular &amp; Supplementary Exams and condonation fee after deducting the amount already credited</Big>
            <Big $bold $center $size={14}>06-10-2020</Big>
          </SheetRow>
          <SheetRow $h={32}>
            <Big>6.</Big>
            <Big colSpan={2}>Stationary Distributions</Big>
            <SubCell $bold $center $size={13.5} $lh={15.5}>College - wise details<br />given in Table- II</SubCell>
          </SheetRow>
          <SheetRow $h={30}>
            <Big>7.</Big>
            <Big colSpan={2}>Intimation of discrepancies in the nominal rolls, if any, should be sent</Big>
            <Big $bold $center $size={14}>10-10-2020</Big>
          </SheetRow>
        </tbody>
      </Sheet>
    </Notice>
  )
}

export default function App() {
  return (
    <Screen>
      <Global />
      <TitleBar>
        <TabTools>
          <TabsIcon />
          <SideTabIcon />
        </TabTools>
        <Tab $w={301} $active>
          <File size={20} strokeWidth={1.4} color="#222" />
          <TabText $w={220} $ml={13}>hassangram</TabText>
          <TabClose $r={13}><X size={15} color="#222" /></TabClose>
        </Tab>
        <Tab $w={297} $sep>
          <YahooIcon />
          <TabText $w={220} $ml={13}>exam jntuh date notification - Yahoo</TabText>
          <TabClose $r={11}><X size={15} color="#222" /></TabClose>
        </Tab>
        <Tab $w={299} $sep>
          <YahooIcon />
          <TabText $w={220} $ml={14}>exam jntuh date notification - Yahoo</TabText>
          <TabClose $r={10}><X size={15} color="#222" /></TabClose>
        </Tab>
        <NewTab><Plus size={22} strokeWidth={1.4} color="#222" /></NewTab>
        <WindowButtons>
          <Minus size={16} strokeWidth={1.3} color="#222" />
          <Square size={15} strokeWidth={1.3} color="#222" />
          <X size={18} strokeWidth={1.2} color="#222" />
        </WindowButtons>
      </TitleBar>
      <Toolbar>
        <NavBtn $w={24} $ml={22}><ArrowLeft size={22} strokeWidth={1.3} color="#bdbdbd" /></NavBtn>
        <NavBtn $w={24} $ml={31}><RotateCw size={21} strokeWidth={1.5} color="#222" /></NavBtn>
        <Address>
          <Info size={20} strokeWidth={1.2} color="#666" />
          <FileWord>File</FileWord>
          <Url>C:/Users/moham/OneDrive/Desktop/final%20mini%20project/academic.html</Url>
          <AddressEnd>
            <svg width="22" height="22" viewBox="0 0 22 22" fill="none" stroke="#8a8a8a" strokeWidth="1.200">
              <path d="M1 19L7 3h1l6 16M3.500 13h9" />
              <path d="M14 5c1 1 1 3 0 4M17 3c2 2 2 6 0 8" />
            </svg>
            <Star size={21} strokeWidth={1.3} color="#666" />
          </AddressEnd>
        </Address>
        <ToolIcons>
          <ToolSlot><WalletIcon /></ToolSlot>
          <ToolSlot $w={54}><Puzzle size={23} strokeWidth={1.5} color="#222" /></ToolSlot>
          <ToolSep />
          <ToolSlot $w={56}><Columns2 size={22} strokeWidth={1.4} color="#222" /></ToolSlot>
          <ToolSlot $w={56}><FavoritesIcon /></ToolSlot>
          <ToolSlot $w={55}><CollectionsIcon /></ToolSlot>
          <ToolSlot $w={56}><HeartCheck /></ToolSlot>
          <ToolSlot $w={58}><Profile /></ToolSlot>
          <ToolSlot $w={56}><svg width="16" height="4" viewBox="0 0 16 4"><circle cx="2" cy="2" r="1.500" /><circle cx="8" cy="2" r="1.500" /><circle cx="14" cy="2" r="1.500" /></svg></ToolSlot>
          <ToolSlot $w={50}><BingIcon /></ToolSlot>
        </ToolIcons>
      </Toolbar>
      <Body>
        <LeftCol>
          <FavBar>
            {favs.map((f) => (
              <React.Fragment key={f.label}>
                {f.ml && <FavSep />}
                <FavItem $w={f.w} $ml={f.ml} $gap={f.gap}>
                  <FavIcon>{f.icon}</FavIcon>
                  {f.label}
                </FavItem>
              </React.Fragment>
            ))}
            <FavSep />
            <FavItem $w={140} $ml={10}>
              <FavIcon><FolderIcon /></FavIcon>
              Other favorites
            </FavItem>
          </FavBar>
          <Viewport>
            <Page>
              <PageHeader>
                <Logo>EXAM NOTIFICATION</Logo>
              </PageHeader>
              <Content>
                <SideNav>
                  {navItems.map((item) => (
                    <NavItem key={item.label} $indent={item.indent} $gap={item.gap} $h={item.h} $active={item.active}>
                      {item.icon}
                      {item.label}
                    </NavItem>
                  ))}
                </SideNav>
                <Middle>
                  <FormCard>
                    <FilePill>
                      <ChooseFile type="button">Choose File</ChooseFile>
                      JNTUH-Revised-dates-of…20-Exams-1024x675.png
                    </FilePill>
                    <FieldLabel $mt={23} $mb={0}>Title:</FieldLabel>
                    <TextField>new on upcoming exams</TextField>
                    <FieldLabel $mt={23}>Description:</FieldLabel>
                    <TextArea>
                      new on upcoming exams
                      <ResizeGrip width="10" height="10" viewBox="0 0 10 10" stroke="#555">
                        <path d="M9 2L2 9M9 6L6 9" />
                      </ResizeGrip>
                    </TextArea>
                    <PrimaryButton type="button" $mt={24}>Add Media</PrimaryButton>
                  </FormCard>
                  <SectionTitle>latest notification</SectionTitle>
                  <PostCard>
                    <RemoveX>X</RemoveX>
                    <NoticeSheet />
                  </PostCard>
                </Middle>
                <SidePanel>
                  <PanelTitle>SUGGESTIONS</PanelTitle>
                  <TaskInput>Add a new task</TaskInput>
                  <PrimaryButton type="button" $mt={24} $w={216} $ml={-1}>Add</PrimaryButton>
                </SidePanel>
              </Content>
            </Page>
            <ScrollTrack>
              <ScrollArrow />
              <ScrollThumb />
              <ScrollArrow $down />
            </ScrollTrack>
          </Viewport>
        </LeftCol>
        <Rail>
          {railIcons.map((icon, i) => <RailSlot key={i}>{icon}</RailSlot>)}
          <RailSlot $mt={4}><Plus size={22} strokeWidth={1.3} color="#222" /></RailSlot>
          <RailBottom>
            <RailRule />
            <RailSlot><PanelRight size={20} strokeWidth={1.4} color="#222" /></RailSlot>
            <RailSlot><Settings size={21} strokeWidth={1.4} color="#222" /></RailSlot>
          </RailBottom>
        </Rail>
      </Body>
      <TaskBar>
        <StartBtn><WinLogo /></StartBtn>
        <SearchBox>
          <Search size={20} strokeWidth={2} color="#222" />
          Search
          <DragonArt />
        </SearchBox>
        <Apps>
          <AppSlot><TaskViewIcon /></AppSlot>
          <AppSlot><WeatherIcon /><Badge $light $right={3} $top={3}>32°</Badge></AppSlot>
          <AppSlot><TeamsIcon /><Badge>1</Badge></AppSlot>
          <AppSlot><ExplorerIcon /><RunDot /></AppSlot>
          <AppSlot><HelpIcon /></AppSlot>
          <AppSlot><CopilotIcon size={32} /></AppSlot>
          <AppSlot><StoreIcon /></AppSlot>
          <AppSlot><FirefoxIcon /></AppSlot>
          <AppSlot><WhatsAppIcon /><Badge>23</Badge></AppSlot>
          <AppSlot $active $w={48}><EdgeIcon /><RunDot $wide /></AppSlot>
          <AppSlot><MySqlIcon /></AppSlot>
          <AppSlot><VlcIcon /><RunDot /></AppSlot>
        </Apps>
        <Tray>
          <ChevronUp size={20} strokeWidth={1.8} color="#222" />
          <TrayLang>ENG<br />IN</TrayLang>
          <TrayIcons>
            <Wifi size={20} strokeWidth={1.5} color="#222" />
            <Volume2 size={21} strokeWidth={1.3} color="#222" />
            <Battery />
          </TrayIcons>
          <Clock>17:59<br />16-10-2023</Clock>
          <TrayBell><Bell size={20} strokeWidth={1.3} color="#222" /></TrayBell>
        </Tray>
      </TaskBar>
    </Screen>
  )
}
